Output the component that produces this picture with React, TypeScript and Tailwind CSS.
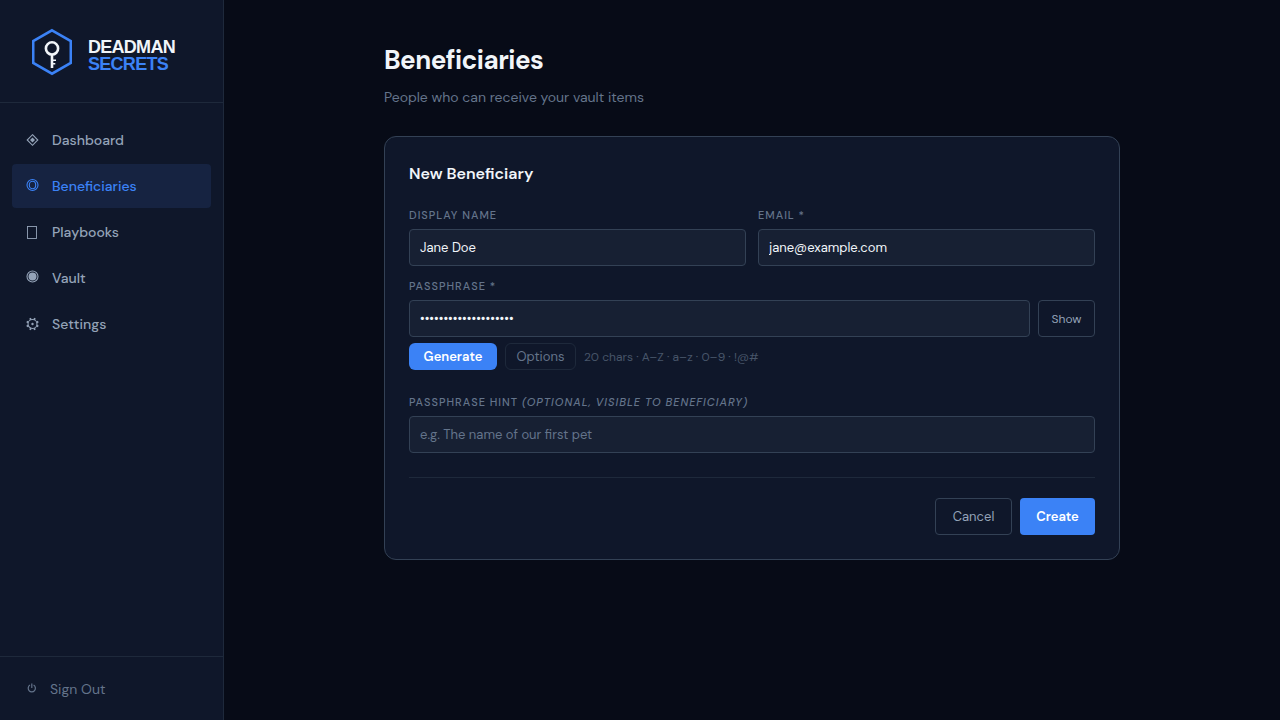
import { useState } from 'react';

interface NavItem {
  label: string;
  href: string;
  icon: JSX.Element;
}

const NAV_ITEMS: NavItem[] = [
  {
    label: 'Dashboard',
    href: '#dashboard',
    icon: (
      <svg className="size-4" fill="none" stroke="currentColor" strokeWidth={1.1} viewBox="0 0 16 16">
        <path d="M8.5 2.7L13.8 8L8.5 13.3L3.2 8Z" />
        <path d="M8.5 5.5L11 8L8.5 10.5L6 8Z" fill="currentColor" stroke="none" />
      </svg>
    ),
  },
  {
    label: 'Beneficiaries',
    href: '#beneficiaries',
    icon: (
      <svg className="size-4" fill="none" stroke="currentColor" strokeWidth={1.1} viewBox="0 0 16 16">
        <circle cx="8.5" cy="7" r="5.5" />
        <ellipse cx="8.5" cy="7" rx="3.2" ry="3.8" />
      </svg>
    ),
  },
  {
    label: 'Playbooks',
    href: '#playbooks',
    icon: (
      <svg className="size-4" fill="none" stroke="currentColor" strokeWidth={0.9} viewBox="0 0 16 16">
        <rect x="3.5" y="2.5" width="9" height="12" />
      </svg>
    ),
  },
  {
    label: 'Vault',
    href: '#vault',
    icon: (
      <svg className="size-4" fill="none" stroke="currentColor" strokeWidth={1.1} viewBox="0 0 16 16">
        <circle cx="8.5" cy="6.5" r="5.5" />
        <circle cx="8.5" cy="6.5" r="4" fill="currentColor" stroke="none" />
      </svg>
    ),
  },
  {
    label: 'Settings',
    href: '#settings',
    icon: (
      <svg className="size-4" fill="none" stroke="currentColor" strokeWidth={1.1} viewBox="0 0 16 16">
        <circle cx="8.5" cy="8" r="4.5" />
        <circle cx="8.5" cy="8" r="1.2" fill="currentColor" stroke="none" />
        <path strokeWidth={1.8} d="M12.6 9.7L14.3 10.4M10.2 12.1L10.9 13.8M6.8 12.1L6.1 13.8M4.4 9.7L2.7 10.4M4.4 6.3L2.7 5.6M6.8 3.9L6.1 2.2M10.2 3.9L10.9 2.2M12.6 6.3L14.3 5.6" />
      </svg>
    ),
  },
];

const LABEL_CLASS = 'block text-[11px] leading-4 font-medium tracking-[1px] uppercase text-[#64748b]';
const INPUT_CLASS =
  'w-full min-w-0 h-[37px] px-2.5 rounded-sm border border-[#334155] bg-[#172033] text-[13px] text-[#f1f5f9] placeholder:text-[#64748b] outline-none';

function Logo() {
  return (
    <svg className="w-10 h-12 shrink-0" fill="none" viewBox="0 0 40 48">
      <path d="M20 2.3L38.8 13V35L20 45.7L1.2 35V13Z" stroke="#3b82f6" strokeWidth={2.6} />
      <circle cx="20" cy="20.4" r="6.1" stroke="#f1f5f9" strokeWidth={2.6} />
      <path d="M20 26.5V40" stroke="#f1f5f9" strokeWidth={2.6} />
      <path d="M21 32.3H24M21 35.7H23.3" stroke="#f1f5f9" strokeWidth={1.6} />
    </svg>
  );
}

function Sidebar() {
  return (
    <aside className="w-56 shrink-0 flex flex-col bg-[#0f172a] border-r border-[#1e293b]">
      <div className="flex items-center gap-4 h-[103px] px-8 pt-0.5 border-b border-[#1e293b]">
        <Logo />
        <div className="pt-2 font-['Liberation_Sans',Arial,sans-serif] text-[18px] leading-[17px] font-bold tracking-[-0.04em]">
          <div className="text-[#f1f5f9]">DEADMAN</div>
          <div className="text-[#3b82f6]">SECRETS</div>
        </div>
      </div>

      <nav className="flex-1 flex flex-col gap-0.5 px-3 pt-[15px]">
        {NAV_ITEMS.map((item) => (
          <a
            key={item.label}
            href={item.href}
            className={`flex items-center gap-3 h-11 px-3 rounded-sm text-sm font-medium ${
              item.label === 'Beneficiaries' ? 'bg-[#162341] text-[#3b82f6]' : 'text-[#94a3b8]'
            }`}
          >
            {item.icon}
            {item.label}
          </a>
        ))}
      </nav>

      <div className="p-3 border-t border-[#1e293b]">
        <button type="button" className="flex items-center gap-2.5 w-full h-[39px] px-3 text-sm text-[#64748b]">
          <svg className="size-4" fill="none" stroke="currentColor" strokeWidth={1.2} viewBox="0 0 16 16">
            <path d="M6 4.1A3.6 3.6 0 1 0 9.6 4.1M7.8 2.6V7" />
          </svg>
          Sign Out
        </button>
      </div>
    </aside>
  );
}

function BeneficiaryForm() {
  const [name, setName] = useState('Jane Doe');
  const [email, setEmail] = useState('jane@example.com');
  const [passphrase, setPassphrase] = useState('correct-horse-staple');
  const [hint, setHint] = useState('');
  const [visible, setVisible] = useState(false);

  return (
    <form
      onSubmit={(e) => e.preventDefault()}
      className="p-6 rounded-xl border border-[#334155] bg-[#0f172a]"
    >
      <h2 className="text-base leading-[26px] font-semibold text-[#f1f5f9]">New Beneficiary</h2>

      <div className="grid grid-cols-2 gap-3 mt-5">
        <div className="flex flex-col gap-1.5">
          <label htmlFor="name" className={LABEL_CLASS}>Display Name</label>
          <input id="name" className={INPUT_CLASS} value={name} onChange={(e) => setName(e.target.value)} />
        </div>
        <div className="flex flex-col gap-1.5">
          <label htmlFor="email" className={LABEL_CLASS}>Email *</label>
          <input id="email" type="email" className={INPUT_CLASS} value={email} onChange={(e) => setEmail(e.target.value)} />
        </div>
      </div>

      {/* Passphrase */}
      <div className="flex flex-col gap-1.5 mt-3">
        <label htmlFor="passphrase" className={LABEL_CLASS}>Passphrase *</label>
        <div className="flex gap-2">
          <input
            id="passphrase"
            type={visible ? 'text' : 'password'}
            className={INPUT_CLASS}
            value={passphrase}
            onChange={(e) => setPassphrase(e.target.value)}
          />
          <button
            type="button"
            onClick={() => setVisible(!visible)}
            className="w-[57px] shrink-0 rounded-sm border border-[#334155] text-xs text-[#94a3b8]"
          >
            {visible ? 'Hide' : 'Show'}
          </button>
        </div>
        <div className="flex items-center gap-2">
          <button type="button" className="w-[88px] h-[27px] rounded-md bg-[#3b82f6] text-[13px] font-semibold text-white">
            Generate
          </button>
          <button type="button" className="w-[71px] h-[27px] rounded-md border border-[#1e293b] text-[13px] text-[#64748b]">
            Options
          </button>
          <span className="text-xs text-[#475569]">20 chars · A–Z · a–z · 0–9 · !@#</span>
        </div>
      </div>

      <div className="flex flex-col gap-1.5 mt-6">
        <label htmlFor="hint" className={LABEL_CLASS}>
          Passphrase Hint <em>(optional, visible to beneficiary)</em>
        </label>
        <input
          id="hint"
          className={INPUT_CLASS}
          placeholder="e.g. The name of our first pet"
          value={hint}
          onChange={(e) => setHint(e.target.value)}
        />
      </div>

      <div className="flex justify-end gap-2 mt-6 pt-5 border-t border-[#1e293b]">
        <button type="button" className="w-[77px] h-[37px] rounded-sm border border-[#334155] text-[13px] text-[#94a3b8]">
          Cancel
        </button>
        <button type="submit" className="w-[75px] h-[37px] rounded-sm bg-[#3b82f6] text-[13px] font-semibold text-white">
          Create
        </button>
      </div>
    </form>
  );
}

export default function App() {
  return (
    <div className="flex min-h-screen bg-[#070b17] font-['DM_Sans',Inter,sans-serif]">
      <Sidebar />
      <main className="flex-1 min-w-0">
        <div className="max-w-[800px] mx-auto px-8 py-10">
          <h1 className="text-[26px] leading-10 font-bold tracking-[-0.02em] text-[#f1f5f9]">Beneficiaries</h1>
          <p className="mt-1.5 mb-7 text-sm leading-[22px] text-[#64748b]">People who can receive your vault items</p>
          <BeneficiaryForm />
        </div>
      </main>
    </div>
  );
}
